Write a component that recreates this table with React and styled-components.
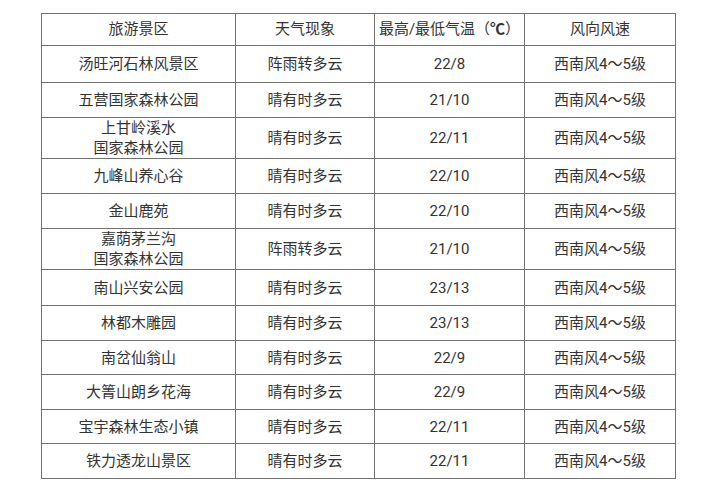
import React from "react";
import styled, { createGlobalStyle } from "styled-components";

const GlobalStyle = createGlobalStyle`
  html, body {
    margin: 0;
    padding: 0;
    background: #ffffff;
  }
  body {
    font-family: "Roboto", "Noto Sans CJK SC", "Noto Sans", sans-serif;
    color: #333333;
  }
`;

const Page = styled.div`
  width: 719px;
  height: 500px;
  box-sizing: border-box;
  padding: 13px 0 0 41px;
  background: #ffffff;
`;

const Table = styled.table`
  border-collapse: collapse;
  table-layout: fixed;
  width: 634px;
  font-size: 15px;
  color: #333333;
`;

const Col = styled.col`
  width: ${(p) => p.$w}px;
`;

const Row = styled.tr`
  height: ${(p) => p.$h}px;
`;

const HeadCell = styled.th`
  border: 1px solid #707070;
  font-weight: 400;
  text-align: center;
  vertical-align: middle;
  padding: 0;
  line-height: 19px;
`;

const Cell = styled.td`
  border: 1px solid #707070;
  text-align: center;
  vertical-align: middle;
  padding: 0;
  line-height: 20px;
  white-space: pre-line;
`;

const Degree = styled.span`
  font-weight: 700;
`;

const rows = [
  { name: "汤旺河石林风景区", wx: "阵雨转多云", t: "22/8", h: 37 },
  { name: "五营国家森林公园", wx: "晴有时多云", t: "21/10", h: 35 },
  { name: "上甘岭溪水\n国家森林公园", wx: "晴有时多云", t: "22/11", h: 40 },
  { name: "九峰山养心谷", wx: "晴有时多云", t: "22/10", h: 35 },
  { name: "金山鹿苑", wx: "晴有时多云", t: "22/10", h: 35 },
  { name: "嘉荫茅兰沟\n国家森林公园", wx: "阵雨转多云", t: "21/10", h: 39 },
  { name: "南山兴安公园", wx: "晴有时多云", t: "23/13", h: 36 },
  { name: "林都木雕园", wx: "晴有时多云", t: "23/13", h: 35 },
  { name: "南岔仙翁山", wx: "晴有时多云", t: "22/9", h: 34 },
  { name: "大箐山朗乡花海", wx: "晴有时多云", t: "22/9", h: 35 },
  { name: "宝宇森林生态小镇", wx: "晴有时多云", t: "22/11", h: 34 },
  { name: "铁力透龙山景区", wx: "晴有时多云", t: "22/11", h: 35 },
];

export default function App() {
  return (
    <Page>
      <GlobalStyle />
      <Table>
        <colgroup>
          <Col $w={194} />
          <Col $w={139} />
          <Col $w={150} />
          <Col $w={151} />
        </colgroup>
        <thead>
          <Row $h={32}>
            <HeadCell>旅游景区</HeadCell>
            <HeadCell>天气现象</HeadCell>
            <HeadCell>
              最高/最低气温（<Degree>℃</Degree>）
            </HeadCell>
            <HeadCell>风向风速</HeadCell>
          </Row>
        </thead>
        <tbody>
          {rows.map((r, i) => (
            <Row key={i} $h={r.h}>
              <Cell>{r.name}</Cell>
              <Cell>{r.wx}</Cell>
              <Cell>{r.t}</Cell>
              <Cell>西南风4～5级</Cell>
            </Row>
          ))}
        </tbody>
      </Table>
    </Page>
  );
}
